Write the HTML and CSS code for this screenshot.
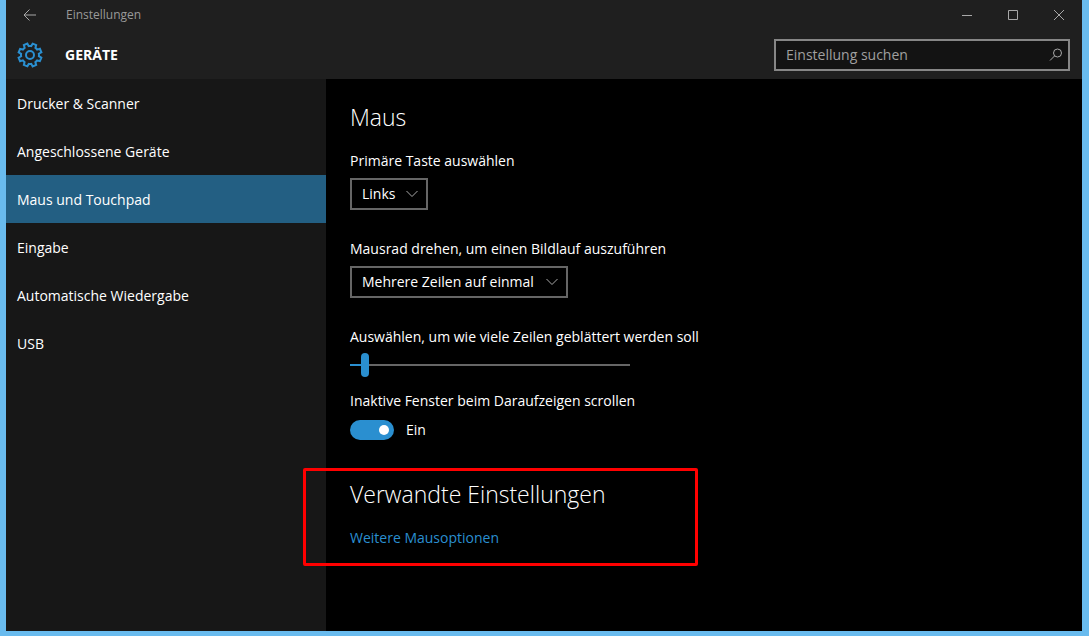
FILE: index.html
```html
<!DOCTYPE html>
<html lang="de">
<head>
    <meta charset="UTF-8">
    <meta name="viewport" content="width=device-width, initial-scale=1.0">
    <title>Einstellungen</title>
    <link rel="stylesheet" href="styles.css">
</head>
<body>
    <div class="window">
        <header class="header">
            <div class="titlebar">
                <button class="title-btn back" aria-label="Zurück">
                    <svg width="14" height="12" viewBox="0 0 14 12"><path d="M1 6h12M6.500 .5L1 6l5.500 5.500"/></svg>
                </button>
                <span class="title">Einstellungen</span>
                <button class="title-btn" aria-label="Minimieren">
                    <svg width="10" height="10" viewBox="0 0 10 10"><path d="M0 5.500h10"/></svg>
                </button>
                <button class="title-btn" aria-label="Maximieren">
                    <svg width="10" height="10" viewBox="0 0 10 10"><path d="M.5 .5h9v9h-9z"/></svg>
                </button>
                <button class="title-btn" aria-label="Schließen">
                    <svg width="10" height="10" viewBox="0 0 10 10"><path d="M0 0l10 10M10 0L0 10"/></svg>
                </button>
            </div>
            <div class="topbar">
                <svg class="gear" width="26" height="26" viewBox="-13 -13 26 26">
                    <path transform="rotate(22.5)" d="M-1.900 -11.500L1.900 -11.500L2.300 -8.700Q3.600 -8.400 4.600 -7.700L6.800 -9.500L9.500 -6.800L7.700 -4.600Q8.400 -3.600 8.700 -2.300L11.500 -1.900L11.500 1.900L8.700 2.300Q8.400 3.600 7.700 4.600L9.500 6.800L6.800 9.500L4.600 7.700Q3.600 8.400 2.300 8.700L1.900 11.500L-1.900 11.500L-2.300 8.700Q-3.600 8.400 -4.600 7.700L-6.800 9.500L-9.500 6.800L-7.700 4.600Q-8.400 3.600 -8.700 2.300L-11.500 1.900L-11.500 -1.900L-8.700 -2.300Q-8.400 -3.600 -7.700 -4.600L-9.500 -6.800L-6.800 -9.500L-4.600 -7.700Q-3.600 -8.400 -2.300 -8.700Z"/>
                    <circle r="4"/>
                </svg>
                <h1>GERÄTE</h1>
                <div class="search">
                    <input type="text" placeholder="Einstellung suchen" aria-label="Einstellung suchen">
                    <svg width="14" height="14" viewBox="0 0 14 14"><circle cx="8.500" cy="5" r="4"/><path d="M5.700 7.800L1 12.500"/></svg>
                </div>
            </div>
        </header>

        <div class="content">
            <nav class="sidebar">
                <a href="#">Drucker &amp; Scanner</a>
                <a href="#">Angeschlossene Geräte</a>
                <a href="#" class="active">Maus und Touchpad</a>
                <a href="#">Eingabe</a>
                <a href="#">Automatische Wiedergabe</a>
                <a href="#">USB</a>
            </nav>

            <main class="main">
                <h2>Maus</h2>
                <div class="field">
                    <label for="button">Primäre Taste auswählen</label>
                    <div class="select small">
                        <select id="button">
                            <option>Links</option>
                        </select>
                        <svg width="12" height="8" viewBox="0 0 12 8"><path d="M.5 1L6 6.500L11.500 1"/></svg>
                    </div>
                </div>
                <div class="field">
                    <label for="wheel">Mausrad drehen, um einen Bildlauf auszuführen</label>
                    <div class="select">
                        <select id="wheel">
                            <option>Mehrere Zeilen auf einmal</option>
                        </select>
                        <svg width="12" height="8" viewBox="0 0 12 8"><path d="M.5 1L6 6.500L11.500 1"/></svg>
                    </div>
                </div>
                <div class="field slider-field">
                    <label for="lines">Auswählen, um wie viele Zeilen geblättert werden soll</label>
                    <input type="range" id="lines" min="1" max="100" value="5">
                </div>
                <div class="field">
                    <label for="inactive">Inaktive Fenster beim Daraufzeigen scrollen</label>
                    <div class="toggle">
                        <input type="checkbox" id="inactive" checked>
                        <span>Ein</span>
                    </div>
                </div>

                <section class="related">
                    <h2>Verwandte Einstellungen</h2>
                    <a href="#">Weitere Mausoptionen</a>
                </section>
            </main>
        </div>
    </div>
</body>
</html>
```
FILE: styles.css
```css
*, *::before {
    box-sizing: border-box;
    margin: 0;
    padding: 0;
}

body {
    font-family: 'Segoe UI', 'Open Sans', sans-serif;
    font-size: 14px;
    line-height: 20px;
    background: #69bbee;
    color: #fff;
}

button, input, select {
    font: inherit;
    color: inherit;
}

a {
    color: inherit;
    text-decoration: none;
}

svg {
    fill: none;
    stroke: #a8a8a8;
}

.window {
    display: flex;
    flex-direction: column;
    min-height: 100vh;
    border: solid #69bbee;
    border-width: 0 7px 5px 6px;
    background: #000;
}

/* header */
.header {
    background: #1f1f1f;
}

.titlebar {
    display: flex;
    height: 30px;
}

.title-btn {
    display: flex;
    align-items: center;
    justify-content: center;
    width: 46px;
    background: none;
    border: none;
}

.title-btn.back {
    width: 48px;
}

.title {
    flex: 1;
    padding-left: 12px;
    font-size: 12px;
    line-height: 30px;
    color: #999;
}

.topbar {
    display: flex;
    align-items: center;
    height: 49px;
    padding: 0 12px 0 11px;
}

.gear {
    stroke: #2a8fd0;
    stroke-width: 2;
}

.topbar h1 {
    flex: 1;
    padding-left: 22px;
    font-size: 14px;
    font-weight: 700;
}

.search {
    position: relative;
    width: 296px;
}

.search input {
    width: 100%;
    height: 32px;
    padding: 0 32px 0 10px;
    background: #131313;
    border: 2px solid #868686;
}

.search input::placeholder {
    color: #a0a0a0;
}

.search svg {
    position: absolute;
    right: 7px;
    top: 9px;
}

/* content */
.content {
    display: flex;
    flex: 1;
}

.sidebar {
    width: 320px;
    background: #171717;
}

.sidebar a {
    display: block;
    padding: 15px 11px 13px;
}

.sidebar a.active {
    background: #235f83;
}

.main {
    flex: 1;
    padding: 22px 24px;
}

h2 {
    margin-bottom: 18px;
    font-size: 23px;
    font-weight: 300;
    line-height: 32px;
}

.field {
    margin-bottom: 29px;
}

.field label {
    display: block;
    margin-bottom: 7px;
}

.select {
    position: relative;
    width: 218px;
}

.select.small {
    width: 78px;
}

.select select {
    display: block;
    width: 100%;
    height: 32px;
    padding: 0 10px;
    appearance: none;
    background: #000;
    border: 2px solid #666;
}

.select svg {
    position: absolute;
    right: 10px;
    top: 12px;
    pointer-events: none;
}

.slider-field {
    margin-bottom: 14px;
}

.slider-field label {
    margin-bottom: 6px;
}

input[type="range"] {
    display: block;
    width: 280px;
    height: 24px;
    appearance: none;
    background: linear-gradient(#2a8fd0, #2a8fd0) 0 11px / 12px 2px no-repeat,
                linear-gradient(#666, #666) 0 11px / 100% 2px no-repeat;
}

input[type="range"]::-webkit-slider-thumb {
    appearance: none;
    width: 8px;
    height: 24px;
    border-radius: 4px;
    background: #2a8fd0;
}

.toggle {
    display: flex;
    align-items: center;
    gap: 12px;
    padding-top: 2px;
}

.toggle input {
    display: flex;
    align-items: center;
    width: 44px;
    height: 20px;
    padding: 0 5px;
    appearance: none;
    border-radius: 10px;
    background: #666;
}

.toggle input::before {
    content: "";
    width: 10px;
    height: 10px;
    border-radius: 50%;
    background: #fff;
}

.toggle input:checked {
    justify-content: flex-end;
    background: #2a8fd0;
}

.related {
    position: relative;
    margin-top: 38px;
}

.related a {
    color: #2a8fd0;
}

/* highlight frame around the related settings */
.related::before {
    content: "";
    position: absolute;
    top: -10px;
    left: -47px;
    width: 395px;
    height: 98px;
    border: 3px solid #f00;
    border-radius: 2px;
    pointer-events: none;
}
```
